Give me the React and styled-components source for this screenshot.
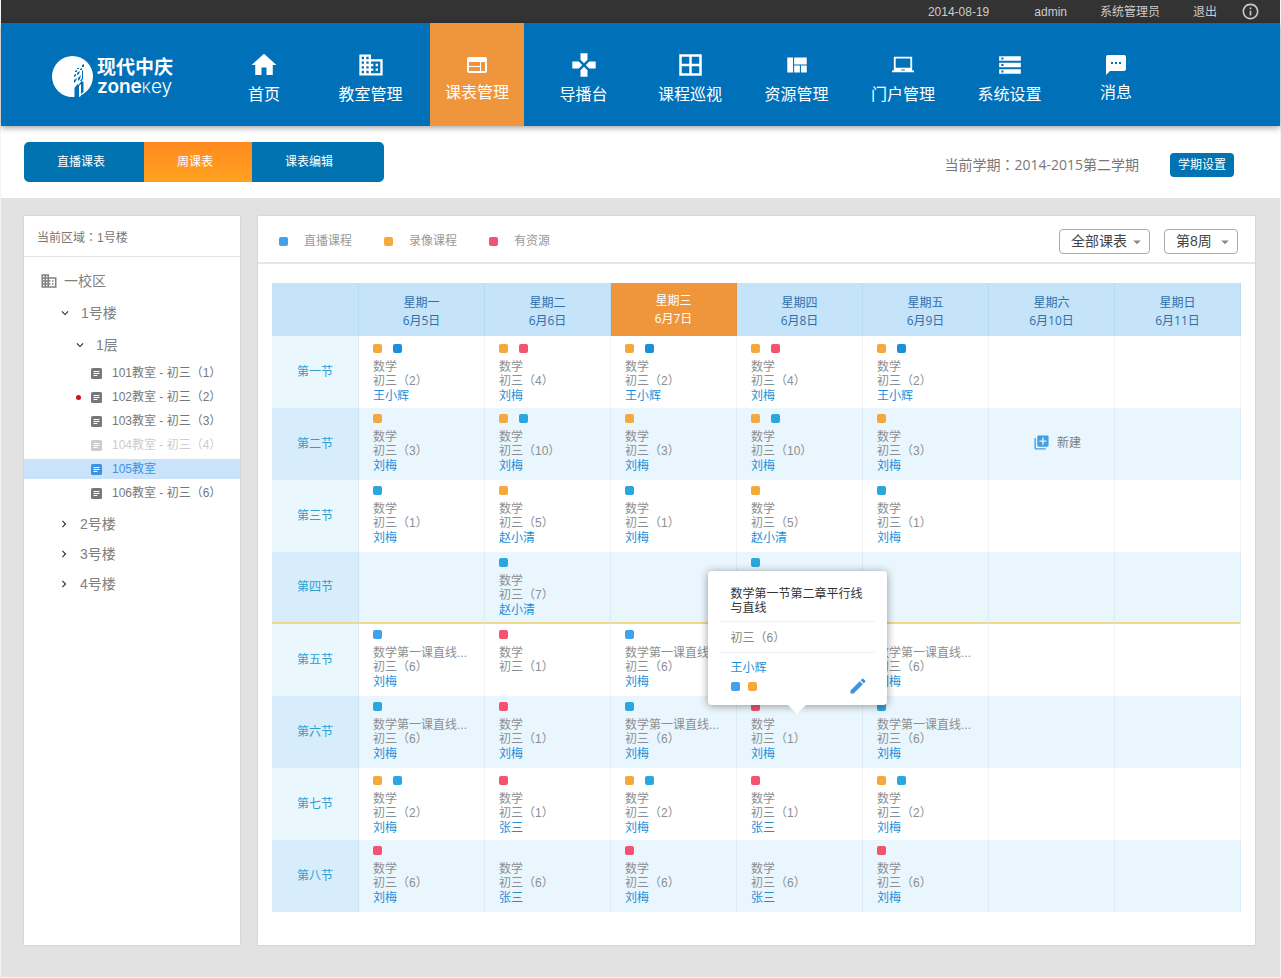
import React from "react";
import styled, { createGlobalStyle, css } from "styled-components";
import {
  MdHome,
  MdBusiness,
  MdWeb,
  MdGamepad,
  MdViewQuilt,
  MdLaptopChromebook,
  MdStorage,
  MdTextsms,
  MdInfoOutline,
  MdExpandMore,
  MdChevronRight,
  MdLibraryAdd,
  MdEdit,
  MdArrowDropDown,
} from "react-icons/md";

const latin = `"Liberation Sans", "Noto Sans CJK SC", sans-serif`;
const humanist = `"Open Sans", "Noto Sans CJK SC", sans-serif`;

const palette = {
  live: "#42a1e8",
  deep: "#1a8fdc",
  cyan: "#2ba6de",
  record: "#f5a83c",
  resource: "#f4526f",
};

const GlobalStyle = createGlobalStyle`
  * { box-sizing: border-box; }
  body {
    margin: 0;
    background: #f4f4f4;
    color: #777;
    font-family: ${humanist};
    font-size: 12px;
    line-height: 16px;
  }
  button, select { font: inherit; color: inherit; }
  button { border: 0; padding: 0; background: none; cursor: pointer; }
  a { color: inherit; text-decoration: none; }
  ul { list-style: none; margin: 0; padding: 0; }
  svg { display: block; flex: none; }
`;

const Page = styled.div`
  margin: 0 1px;
`;

const TopBar = styled.div`
  display: flex;
  justify-content: flex-end;
  align-items: center;
  height: 23px;
  padding-right: 20px;
  background: #333;
  color: #ccc;
  font-family: ${latin};
`;

const TopItem = styled.span`
  margin-right: ${(p) => p.$gap}px;
`;

const Header = styled.header`
  position: relative;
  display: flex;
  height: 103px;
  background: #0071b9;
  box-shadow: 0 2px 6px rgba(0, 0, 0, 0.35);
  color: #fff;
`;

const Brand = styled.a`
  display: flex;
  align-items: center;
  gap: 4px;
  width: 216px;
  padding: 4px 0 0 51px;
`;

const BrandText = styled.span`
  display: flex;
  flex-direction: column;
`;

const BrandName = styled.span`
  font: 700 19px/20px ${latin};
`;

const BrandLatin = styled.span`
  font: 300 19px/17px Inter, ${latin};
  small {
    font-size: 14px;
  }
`;

const BrandStrong = styled.span`
  font-weight: 600;
`;

const Nav = styled.nav`
  display: flex;
  flex: 1;
  justify-content: space-between;
  margin-right: 117px;
`;

const NavItem = styled.a`
  display: flex;
  flex-direction: column;
  align-items: center;
  gap: ${(p) => (p.$tight ? 1 : 3)}px;
  width: 94px;
  padding-top: 28px;
  font-size: 16px;
  line-height: 24px;
  background: ${(p) => (p.$active ? "#ef953b" : "transparent")};
`;

const NavIcon = styled.span`
  display: flex;
  align-items: center;
  justify-content: center;
  height: 28px;
`;

const SubBar = styled.div`
  display: flex;
  align-items: center;
  height: 72px;
  padding: 0 46px 0 23px;
  background: #fff;
`;

const Tabs = styled.div`
  display: flex;
  margin-right: auto;
  border-radius: 5px;
  overflow: hidden;
  background: #0073b0;
`;

const Tab = styled.button`
  height: 40px;
  padding: 0 39px 0 33px;
  color: #fff;
  background: ${(p) => (p.$active ? "linear-gradient(#ff8a1f, #ffa21f)" : "none")};
  &:last-child {
    padding-right: 51px;
  }
`;

const Semester = styled.span`
  margin: 4px 31px 0 0;
  font-size: 14px;
  line-height: 20px;
`;

const Colon = styled.span`
  font-family: "Noto Sans CJK TC", sans-serif;
`;

const SemesterButton = styled.button`
  height: 24px;
  margin-top: 6px;
  padding: 0 8px;
  border-radius: 4px;
  background: #0073b0;
  color: #fff;
`;

const Content = styled.div`
  display: flex;
  gap: 18px;
  padding: 18px 25px 32px 23px;
  background: #e2e2e2;
`;

const Panel = styled.section`
  background: #fff;
  box-shadow: 0 0 2px rgba(0, 0, 0, 0.15);
`;

const Sidebar = styled(Panel)`
  flex: none;
  width: 216px;
`;

const Area = styled.div`
  height: 41px;
  padding: 13px 13px 0;
  border-bottom: 1px solid #e2e2e2;
  font-family: ${latin};
`;

const Tree = styled.ul`
  padding-top: 8px;
`;

const Branch = styled.button`
  display: flex;
  align-items: center;
  gap: ${(p) => (p.$campus ? 6 : 9)}px;
  width: 100%;
  height: ${(p) => p.$height}px;
  padding-left: ${(p) => p.$indent}px;
  font-family: ${latin};
  font-size: 14px;
  svg + span { color: #808080; }
  svg { color: ${(p) => (p.$campus ? "#808080" : "#333")}; }
`;

const Rooms = styled.ul`
  display: flex;
  flex-direction: column;
  gap: 4px;
  padding: 2px 0 6px;
`;

const Room = styled.button`
  display: flex;
  align-items: center;
  width: 100%;
  height: 20px;
  padding-left: 52px;
  font-family: ${latin};
  color: ${(p) => (p.$selected ? "#3e93e0" : p.$off ? "#ccc" : "#777")};
  background: ${(p) => (p.$selected ? "#cae3fb" : "none")};
  svg { margin: 0 10px; }
`;

const Alert = styled.span`
  width: 5px;
  height: 5px;
  border-radius: 50%;
  background: ${(p) => (p.$on ? "#c8141e" : "transparent")};
`;

const Main = styled(Panel)`
  flex: 1;
  min-width: 0;
`;

const Toolbar = styled.div`
  display: flex;
  align-items: center;
  height: 48px;
  padding: 4px 17px 0 21px;
  border-bottom: 2px solid #e6e6e6;
`;

const Legend = styled.ul`
  display: flex;
  gap: 32px;
  margin-right: auto;
  color: #999;
`;

const LegendItem = styled.li`
  display: flex;
  align-items: center;
  gap: 16px;
`;

const Dot = styled.span`
  flex: none;
  width: 9px;
  height: 9px;
  border-radius: 2px;
  background: ${(p) => palette[p.$kind]};
`;

const SelectBox = styled.span`
  position: relative;
  width: ${(p) => p.$width}px;
  margin-left: 14px;
  color: #444;
  svg {
    position: absolute;
    right: 4px;
    top: 4px;
    color: #888;
    pointer-events: none;
  }
`;

const Select = styled.select`
  display: block;
  appearance: none;
  width: 100%;
  height: 25px;
  padding: 0 0 0 11px;
  border: 1px solid #aaa;
  border-radius: 4px;
  background: #fff;
  font-size: 14px;
  font-family: ${latin};
`;

const TableArea = styled.div`
  padding: 19px 14px 33px;
`;

const Table = styled.table`
  width: 100%;
  table-layout: fixed;
  border-spacing: 0;
`;

const divider = css`
  border-right: 1px solid rgba(60, 120, 160, 0.08);
`;

const CornerCell = styled.td`
  width: 87px;
  background: #c5e3f9;
  ${divider}
`;

const DayCell = styled.th`
  height: 53px;
  padding: ${(p) => (p.$today ? "9px 0 8px" : "11px 0 6px")};
  font-weight: 400;
  line-height: 18px;
  color: ${(p) => (p.$today ? "#fff" : "#2f70aa")};
  background: ${(p) => (p.$today ? "#ef953b" : "#c5e3f9")};
  ${divider}
  span { display: block; }
`;

const PeriodRow = styled.tr`
  background: ${(p) => (p.$shaded ? "#eaf6fd" : "#fff")};
  th { background: ${(p) => (p.$shaded ? "#d7edfb" : "#eaf7fd")}; }
  td { padding-top: ${(p) => (p.$roomy ? 8 : 6)}px; }
  th, td {
    ${(p) => p.$noon && "border-bottom: 2px solid #efd98a;"}
  }
`;

const PeriodCell = styled.th`
  height: 72px;
  padding: 0;
  font-weight: 400;
  color: #2aa0d4;
  ${divider}
`;

const Slot = styled.td`
  position: relative;
  height: 72px;
  padding: 0 0 0 14px;
  vertical-align: top;
  font-family: ${latin};
  line-height: 14px;
  white-space: nowrap;
  color: #8b8f92;
  ${divider}
`;

const Dots = styled.div`
  display: flex;
  gap: ${(p) => p.$gap || 11}px;
  height: 9px;
`;

const Subject = styled.div`
  margin-top: 7px;
`;

const Teacher = styled.a`
  display: block;
  line-height: 16px;
  color: #1b90d8;
`;

const NewButton = styled.button`
  display: flex;
  align-items: center;
  gap: 7px;
  margin: 20px 0 0 30px;
  color: #777f84;
  svg { color: #3f9fe8; }
`;

const Popover = styled.div`
  position: absolute;
  z-index: 1;
  bottom: calc(100% - 9px);
  left: 50%;
  width: 179px;
  height: 134px;
  margin-left: -92px;
  padding: 16px 12px 0;
  border-radius: 4px;
  background: #fff;
  box-shadow: 0 1px 8px rgba(0, 0, 0, 0.4);
  white-space: normal;
  &::after {
    content: "";
    position: absolute;
    top: 100%;
    left: 50%;
    margin-left: -9px;
    border: 9px solid transparent;
    border-top-color: #fff;
    border-bottom: 0;
  }
`;

const PopLine = styled.div`
  padding: ${(p) => (p.$title ? "0 8px 6px 11px" : "9px 11px 7px")};
  border-bottom: 1px solid #f1f1f1;
  color: ${(p) => (p.$title ? "#333" : "#888")};
`;

const PopFoot = styled.div`
  display: flex;
  flex-wrap: wrap;
  align-items: center;
  justify-content: space-between;
  padding: 7px 7px 0 11px;
`;

const PopTeacher = styled(Teacher)`
  width: 100%;
`;

const EditButton = styled.button`
  color: #3f93dc;
`;

function Emblem() {
  return (
    <svg width="41" height="41" viewBox="0 0 41 41" aria-hidden="true">
      <circle cx="20.5" cy="20.5" r="20.5" fill="#fff" />
      <g fill="#0071b9">
        <path d="M22.500 41V32l3-4 1 1 3-4 2 1v10l-2.500 2-1 3z" />
        <path d="M22 24l3-2-1 3-2 2zM26 22l3-3-1 4-2 2zM22 19l2-1v2l-2 1zM25 17l3-2-1 3-2 1zM28 25l2-3v3zM23 15l2-1v2h-2zM28 13l2-1v2h-2zM30 9l2-1v3h-2zM30 15l1-1v9l-1 1zM25 12h2v1h-2z" />
      </g>
      <path d="M27 41V30l2-2v12z" fill="#fff" />
    </svg>
  );
}

function WindowIcon() {
  return (
    <svg width="23" height="22" viewBox="0 0 23 22" aria-hidden="true">
      <path d="M1.500 1.500h20v19h-20zM11.500 1.500v19M1.500 11h20" fill="none" stroke="#fff" strokeWidth="2.500" />
    </svg>
  );
}

function RoomIcon() {
  return (
    <svg width="11" height="11" viewBox="0 0 11 11" aria-hidden="true">
      <rect width="11" height="11" rx="1.500" fill="currentColor" />
      <path d="M2.500 3.500h6M2.500 5.500h6M2.500 7.500h4" stroke="#fff" strokeWidth="1" />
    </svg>
  );
}

const navItems = [
  { label: "首页", icon: <MdHome size={30} /> },
  { label: "教室管理", icon: <MdBusiness size={28} /> },
  { label: "课表管理", icon: <MdWeb size={24} />, active: true, tight: true },
  { label: "导播台", icon: <MdGamepad size={28} /> },
  { label: "课程巡视", icon: <WindowIcon /> },
  { label: "资源管理", icon: <MdViewQuilt size={26} /> },
  { label: "门户管理", icon: <MdLaptopChromebook size={22} /> },
  { label: "系统设置", icon: <MdStorage size={26} /> },
  { label: "消息", icon: <MdTextsms size={24} />, tight: true },
];

const rooms = [
  { label: "101教室 - 初三（1）" },
  { label: "102教室 - 初三（2）", alert: true },
  { label: "103教室 - 初三（3）" },
  { label: "104教室 - 初三（4）", off: true },
  { label: "105教室", selected: true },
  { label: "106教室 - 初三（6）" },
];

const days = [
  ["星期一", "6月5日"],
  ["星期二", "6月6日"],
  ["星期三", "6月7日"],
  ["星期四", "6月8日"],
  ["星期五", "6月9日"],
  ["星期六", "6月10日"],
  ["星期日", "6月11日"],
];

const lesson = (dots, group, teacher, subject = "数学") => ({ dots, group, teacher, subject });
const long = "数学第一课直线...";

const r1a = lesson(["record", "deep"], "初三（2）", "王小辉");
const r1b = lesson(["record", "resource"], "初三（4）", "刘梅");
const r2a = lesson(["record"], "初三（3）", "刘梅");
const r2b = lesson(["record", "cyan"], "初三（10）", "刘梅");
const r3a = lesson(["cyan"], "初三（1）", "刘梅");
const r3b = lesson(["record"], "初三（5）", "赵小清");
const r5a = lesson(["live"], "初三（6）", "刘梅", long);
const r6a = lesson(["cyan"], "初三（6）", "刘梅", long);
const r6b = lesson(["resource"], "初三（1）", "刘梅");
const r7a = lesson(["record", "cyan"], "初三（2）", "刘梅");
const r7b = lesson(["resource"], "初三（1）", "张三");
const r8a = lesson(["resource"], "初三（6）", "刘梅");
const r8b = lesson([], "初三（6）", "张三");

const periods = [
  { name: "第一节", roomy: true, slots: [r1a, r1b, r1a, r1b, r1a, null, null] },
  { name: "第二节", slots: [r2a, r2b, r2a, r2b, r2a, { create: true }, null] },
  { name: "第三节", slots: [r3a, r3b, r3a, r3b, r3a, null, null] },
  {
    name: "第四节",
    noon: true,
    slots: [null, lesson(["cyan"], "初三（7）", "赵小清"), null, { dots: ["cyan"] }, null, null, null],
  },
  { name: "第五节", slots: [r5a, lesson(["resource"], "初三（1）"), r5a, null, r5a, null, null] },
  { name: "第六节", slots: [r6a, r6b, r6a, { ...r6b, popover: true }, r6a, null, null] },
  { name: "第七节", roomy: true, slots: [r7a, r7b, r7a, r7b, r7a, null, null] },
  { name: "第八节", slots: [r8a, r8b, r8a, r8b, r8a, null, null] },
];

function LessonPopover() {
  return (
    <Popover>
      <PopLine $title>数学第一节第二章平行线与直线</PopLine>
      <PopLine>初三（6）</PopLine>
      <PopFoot>
        <PopTeacher href="#teacher">王小辉</PopTeacher>
        <Dots $gap={8}>
          <Dot $kind="live" />
          <Dot $kind="record" />
        </Dots>
        <EditButton aria-label="编辑">
          <MdEdit size={20} />
        </EditButton>
      </PopFoot>
    </Popover>
  );
}

function SlotContent({ slot }) {
  if (!slot) return null;
  if (slot.create) {
    return (
      <NewButton>
        <MdLibraryAdd size={17} />
        新建
      </NewButton>
    );
  }
  return (
    <>
      <Dots>
        {slot.dots.map((kind) => (
          <Dot key={kind} $kind={kind} />
        ))}
      </Dots>
      {slot.subject && <Subject>{slot.subject}</Subject>}
      {slot.group && <div>{slot.group}</div>}
      {slot.teacher && <Teacher href="#teacher">{slot.teacher}</Teacher>}
      {slot.popover && <LessonPopover />}
    </>
  );
}

function Picker({ label, width, options }) {
  return (
    <SelectBox $width={width}>
      <Select aria-label={label}>
        {options.map((o) => (
          <option key={o}>{o}</option>
        ))}
      </Select>
      <MdArrowDropDown size={18} />
    </SelectBox>
  );
}

export default function App() {
  return (
    <Page>
      <GlobalStyle />
      <TopBar>
        <TopItem $gap={45}>2014-08-19</TopItem>
        <TopItem $gap={33}>admin</TopItem>
        <TopItem $gap={33}>系统管理员</TopItem>
        <TopItem $gap={24} as="a" href="#logout">退出</TopItem>
        <MdInfoOutline size={19} />
      </TopBar>
      <Header>
        <Brand href="#home">
          <Emblem />
          <BrandText>
            <BrandName>现代中庆</BrandName>
            <BrandLatin>
              <BrandStrong>zone</BrandStrong>
              <small>K</small>ey
            </BrandLatin>
          </BrandText>
        </Brand>
        <Nav>
          {navItems.map((n) => (
            <NavItem key={n.label} href="#nav" $active={n.active} $tight={n.tight}>
              <NavIcon>{n.icon}</NavIcon>
              {n.label}
            </NavItem>
          ))}
        </Nav>
      </Header>
      <SubBar>
        <Tabs>
          <Tab>直播课表</Tab>
          <Tab $active>周课表</Tab>
          <Tab>课表编辑</Tab>
        </Tabs>
        <Semester>当前学期<Colon>：</Colon>2014-2015第二学期</Semester>
        <SemesterButton>学期设置</SemesterButton>
      </SubBar>
      <Content>
        <Sidebar>
          <Area>当前区域<Colon>：</Colon>1号楼</Area>
          <Tree>
            <li>
              <Branch $campus $height={32} $indent={16}>
                <MdBusiness size={18} />
                <span>一校区</span>
              </Branch>
            </li>
            <li>
              <Branch $height={32} $indent={34}>
                <MdExpandMore size={14} />
                <span>1号楼</span>
              </Branch>
            </li>
            <li>
              <Branch $height={32} $indent={49}>
                <MdExpandMore size={14} />
                <span>1层</span>
              </Branch>
              <Rooms>
                {rooms.map((r) => (
                  <li key={r.label}>
                    <Room $selected={r.selected} $off={r.off}>
                      <Alert $on={r.alert} />
                      <RoomIcon />
                      {r.label}
                    </Room>
                  </li>
                ))}
              </Rooms>
            </li>
            {["2号楼", "3号楼", "4号楼"].map((b) => (
              <li key={b}>
                <Branch $height={30} $indent={33}>
                  <MdChevronRight size={14} />
                  <span>{b}</span>
                </Branch>
              </li>
            ))}
          </Tree>
        </Sidebar>
        <Main>
          <Toolbar>
            <Legend>
              <LegendItem><Dot $kind="live" />直播课程</LegendItem>
              <LegendItem><Dot $kind="record" />录像课程</LegendItem>
              <LegendItem><Dot $kind="resource" />有资源</LegendItem>
            </Legend>
            <Picker label="课表" width={91} options={["全部课表"]} />
            <Picker label="周次" width={74} options={["第8周"]} />
          </Toolbar>
          <TableArea>
            <Table>
              <thead>
                <tr>
                  <CornerCell />
                  {days.map(([day, date], i) => (
                    <DayCell key={day} scope="col" $today={i === 2}>
                      <span>{day}</span>
                      <span>{date}</span>
                    </DayCell>
                  ))}
                </tr>
              </thead>
              <tbody>
                {periods.map((p, row) => (
                  <PeriodRow key={p.name} $shaded={row % 2 === 1} $roomy={p.roomy} $noon={p.noon}>
                    <PeriodCell scope="row">{p.name}</PeriodCell>
                    {p.slots.map((slot, i) => (
                      <Slot key={i}>
                        <SlotContent slot={slot} />
                      </Slot>
                    ))}
                  </PeriodRow>
                ))}
              </tbody>
            </Table>
          </TableArea>
        </Main>
      </Content>
    </Page>
  );
}
